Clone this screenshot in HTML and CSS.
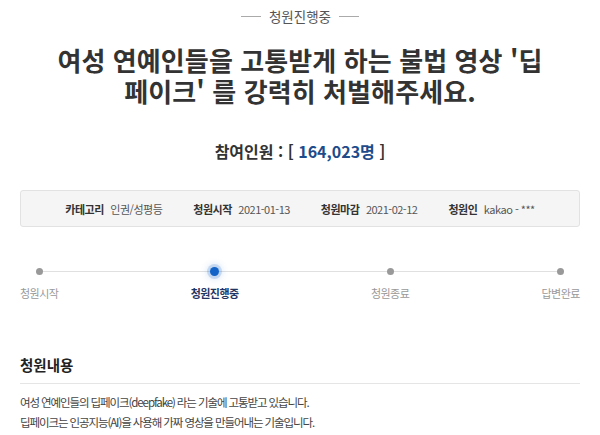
FILE: index.html
```html
<!DOCTYPE html>
<html lang="ko">
<head>
    <meta charset="UTF-8">
    <meta name="viewport" content="width=device-width, initial-scale=1.0">
    <title>청원진행중</title>
    <link rel="stylesheet" href="styles.css">
</head>
<body>
    <div class="container">
        <div class="status">
            <span class="dash"></span>
            <span>청원진행중</span>
            <span class="dash"></span>
        </div>

        <h1>여성 연예인들을 고통받게 하는 불법 영상 '딥<br>페이크' 를 강력히 처벌해주세요.</h1>

        <p class="count">참여인원 : [ <span class="num">164,023명</span> ]</p>

        <ul class="info">
            <li><b>카테고리</b> 인권/성평등</li>
            <li><b>청원시작</b> 2021-01-13</li>
            <li><b>청원마감</b> 2021-02-12</li>
            <li><b>청원인</b> kakao - ***</li>
        </ul>

        <div class="progress">
            <div class="track"></div>
            <div class="step">
                <span class="dot"></span>
                <span class="label">청원시작</span>
            </div>
            <div class="step active">
                <span class="dot"></span>
                <span class="label">청원진행중</span>
            </div>
            <div class="step">
                <span class="dot"></span>
                <span class="label">청원종료</span>
            </div>
            <div class="step">
                <span class="dot"></span>
                <span class="label">답변완료</span>
            </div>
        </div>

        <h3>청원내용</h3>
        <div class="text">
            <p>여성 연예인들의 딥페이크(deepfake) 라는 기술에 고통받고 있습니다.</p>
            <p>딥페이크는 인공지능(AI)을 사용해 가짜 영상을 만들어내는 기술입니다.</p>
        </div>
    </div>
</body>
</html>
```

FILE: styles.css
```css
body {
    margin: 0;
    background-color: #fff;
    font-family: "Noto Sans CJK KR", "Noto Sans", sans-serif;
    color: #333;
}

.container {
    padding: 0 20px;
}

.status {
    display: flex;
    justify-content: center;
    align-items: center;
    gap: 8px;
    margin-top: 6px;
    height: 20px;
    font-size: 13.5px;
    color: #555;
}

.dash {
    display: block;
    width: 20px;
    height: 1px;
    background-color: #aaa;
}

h1 {
    margin: 18px 0 0;
    font-size: 26px;
    line-height: 31px;
    font-weight: bold;
    letter-spacing: 0.1px;
    text-align: center;
    color: #333;
}

.count {
    margin: 34px 0 0;
    font-size: 16px;
    line-height: 22px;
    font-weight: bold;
    text-align: center;
    color: #333;
}

.num {
    color: #1e4b8a;
}

.info {
    display: flex;
    justify-content: center;
    align-items: center;
    gap: 31px;
    height: 35px;
    margin: 28px 0 0;
    padding: 0;
    list-style: none;
    background-color: #f5f5f5;
    border: 1px solid #e2e2e2;
    border-radius: 3px;
    font-size: 11px;
    letter-spacing: -0.5px;
    color: #555;
}

.info b {
    margin-right: 4px;
    color: #333;
}

.progress {
    position: relative;
    display: flex;
    justify-content: space-between;
    margin-top: 41px;
}

.track {
    position: absolute;
    left: 18px;
    right: 18px;
    top: 3px;
    height: 1px;
    background-color: #e0e0e0;
}

.step {
    position: relative;
    display: flex;
    flex-direction: column;
    align-items: center;
}

.dot {
    width: 7px;
    height: 7px;
    border-radius: 50%;
    background-color: #999;
}

.step.active .dot {
    width: 9px;
    height: 9px;
    margin-top: -1px;
    margin-bottom: -1px;
    background-color: #1464c8;
    box-shadow: 0 0 0 3px rgba(20, 100, 200, 0.18), 0 0 6px 4px rgba(20, 100, 200, 0.12);
}

.label {
    margin-top: 10px;
    font-size: 11px;
    line-height: 16px;
    letter-spacing: -0.5px;
    color: #999;
}

.step.active .label {
    font-weight: bold;
    color: #1f3564;
}

h3 {
    margin: 54px 0 0;
    padding-bottom: 8px;
    border-bottom: 1px solid #e5e5e5;
    font-size: 14.5px;
    line-height: 20px;
    font-weight: bold;
    color: #222;
}

.text {
    padding-top: 8px;
    font-size: 11.5px;
    letter-spacing: -1.1px;
    color: #444;
}

.text p {
    margin: 0;
    line-height: 20px;
}
```
